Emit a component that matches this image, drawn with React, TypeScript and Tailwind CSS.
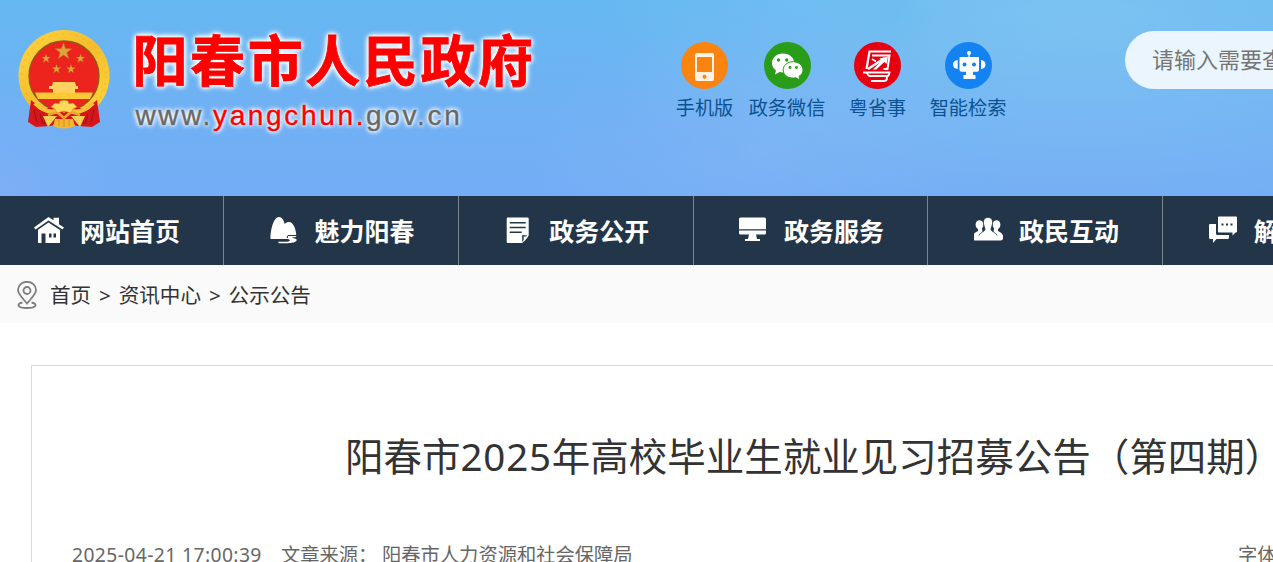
import type { ReactNode } from "react";

interface QuickLink {
  label: string;
  color: string;
  className: string;
  icon: ReactNode;
}

interface NavItem {
  label: string;
  icon: ReactNode;
}

const quickLinks: QuickLink[] = [
  {
    label: "手机版",
    color: "bg-[#fb830f]",
    className: "w-[58px]",
    icon: (
      <svg viewBox="0 0 47 47" className="w-full h-full">
        <path fill="#fff3e6" fillRule="evenodd" d="M16 11h15q2 0 2 2v24q0 2-2 2H16q-2 0-2-2V13q0-2 2-2zM16 15v15h15V15z" />
        <circle cx="23.5" cy="34.7" r="2" fill="#fb830f" />
      </svg>
    ),
  },
  {
    label: "政务微信",
    color: "bg-[#299c19]",
    className: "w-[77px] ml-[15px]",
    icon: (
      <svg viewBox="0 0 47 47" className="w-full h-full">
        <path fill="#fff" d="M19 11.500c-6.300 0-11 4.200-11 9.500 0 3 1.600 5.700 4 7.500l-1 4 4.600-2.500c5.800 1.400 14.600-.5 14.600-9.200 0-5.200-5-9.300-11.200-9.300z" />
        <path fill="#fff" stroke="#299c19" strokeWidth="1" d="M29 19.700c-5.600 0-9.800 3.700-9.800 8.200 0 5.800 5.800 9.200 12.800 7.900l4 2.200-1-3.600c2.500-1.600 4-3.900 4-6.500 0-4.500-4.400-8.200-10-8.200z" />
        <g fill="#299c19">
          <circle cx="14.500" cy="18" r="1.700" />
          <circle cx="22.700" cy="18" r="1.700" />
          <circle cx="26" cy="25.500" r="1.400" />
          <circle cx="32.500" cy="25.500" r="1.400" />
        </g>
      </svg>
    ),
  },
  {
    label: "粤省事",
    color: "bg-[#e60012]",
    className: "w-[58px] ml-[23px]",
    icon: (
      <svg viewBox="0 0 47 47" className="w-full h-full" fill="none" stroke="#fff">
        <path strokeWidth="2.200" d="M37 9.500H15.500L12.500 27" />
        <path strokeWidth="2" d="M18 13.500h17.500L33.500 27h-4" />
        <path strokeWidth="2.400" d="M14 27 30 16.500" />
        <path fill="#fff" stroke="none" d="M34 14.500 32.500 22l-2.200-2-8 7.500h-3.500l9.200-9-2.500-2z" />
        <path strokeWidth="1.500" d="m18 17 4 2.500" />
        <path strokeWidth="1.800" d="M9 30.500h26.500q-.5 3.500-2 3.500H16q-2 0-3-3M20 34h11q2 0 2 2 0 3-3 3H17" />
      </svg>
    ),
  },
  {
    label: "智能检索",
    color: "bg-[#1482f0]",
    className: "w-[77px] ml-[23px]",
    icon: (
      <svg viewBox="0 0 47 47" className="w-full h-full" fill="#fff">
        <circle cx="24" cy="11" r="2" />
        <path d="M23.400 12h1.200v4h-1.200z" />
        <path fillRule="evenodd" d="M15 15h18.500q.5 0 .5.700V28q0 1.800-1.800 1.800H28V33h2.500v4h-12v-4H21v-3.200h-4.500q-2 0-2-1.800V15.700q0-.7.500-.7zM19.500 20.500a2 2 0 1 0 .01 0zM29 20.500a2 2 0 1 0 .01 0z" />
        <path d="M12.700 18v9Q8 26.500 8 22.500T12.700 18zM36 18v9q4.500-.5 4.500-4.500T36 18z" />
      </svg>
    ),
  },
];

const navItems: NavItem[] = [
  {
    label: "网站首页",
    icon: (
      <>
        <path d="M0 11.500 14.500 1l5 3.200V1.800H25v6.400l5 3.300-1.500 2L14.500 4.500 1.500 13.500z" />
        <path fillRule="evenodd" d="M14.500 6.500 26 14v13H11.500v-9.500H7.500V27H4V13.700zM15 17.500v4h2.500v-4zM19.500 17.500v4H22v-4z" />
      </>
    ),
  },
  {
    label: "魅力阳春",
    icon: (
      <>
        <path d="M.5 22.500C.5 14 3.500 1 9 1c3 0 4.600 3 5.700 7 1.200-1.500 2.800-2 4.500-2 4 0 7 7.500 7 13H18l-1.500 2.500 3 1.500H.5z" />
        <path d="M18 20h8.500l-1 1.200h-4l5 2c1.500 3-5.500 4-11 4H9l-1-1.500h8c3 0 6-1 2-2.700z" />
      </>
    ),
  },
  {
    label: "政务公开",
    icon: (
      <g transform="translate(.7 0)">
        <path fillRule="evenodd" d="M3 1.500h20q1 0 1 1v17l-6.500 7.500H3q-1 0-1-1V2.500q0-1 1-1zM5 6v1.500h16V6zM5 10.700v1.500h16v-1.500zM5 15.500V17h12v-1.500zM17.500 19v7l5-6.500z" />
        <path d="M19 20.500h4.500L19 26z" />
      </g>
    ),
  },
  {
    label: "政务服务",
    icon: (
      <path d="M1.500 1.500h24q1.500 0 1.500 1.500v10.300H0V3q0-1.500 1.500-1.500zM0 14.500h27V17q0 1.500-1.500 1.500H17L18 23h3v2H6v-2h3l1-4.500H1.500Q0 18.500 0 17z" />
    ),
  },
  {
    label: "政民互动",
    icon: (
      <g transform="translate(-1 0)">
        <ellipse cx="6.500" cy="8.800" rx="3.900" ry="4.500" />
        <ellipse cx="23.500" cy="8.800" rx="3.900" ry="4.500" />
        <path d="M5 11h3.500l1 4-3 6H0q-.5-3.500 5-6zM25 11h-3.500l-1 4 3 6H30q.5-3.500-5-6z" />
        <path
          stroke="#233549"
          strokeWidth=".8"
          d="M15 1.500c3.500 0 5 2.500 4.500 6-.3 2.500-1.500 4-1.500 6 0 2 6.500 3 7.500 9.500h-21c1-6.500 7.500-7.500 7.500-9.500 0-2-1.200-3.500-1.500-6-.5-3.500 1-6 4.500-6z"
        />
        <path d="M0 19.500h30v2.300q0 2.700-2.500 2.700h-25Q0 24.500 0 21.800z" />
      </g>
    ),
  },
  {
    label: "解读回应",
    icon: (
      <>
        <path d="M1 8h6v9.500q0 1.500 1.500 1.500H20v2.500q0 1.500-1.500 1.500H7.500L4 27v-4H1.500Q0 23 0 21.500V9q0-1 1-1z" />
        <path fillRule="evenodd" d="M10 .5h17q1 0 1 1v14q0 1-1 1h-.5l-3 3v-3H10q-1 0-1-1v-14q0-1 1-1zM12.500 7.500v2h2v-2zM17 7.500v2h2v-2zM21.500 7.500v2h2v-2z" />
      </>
    ),
  },
];

const STAR = "M0-10 2.300-3.200 9.500-3.100 3.800 1.200 5.900 8.100 0 4-5.900 8.100-3.800 1.200-9.500-3.100-2.300-3.200z";

function Emblem() {
  return (
    <svg viewBox="0 0 92 100" className="w-[92px] h-[100px] shrink-0">
      <defs>
        <linearGradient id="gold" x1="0" y1="0" x2="1" y2="1">
          <stop offset="0" stopColor="#ffd540" />
          <stop offset=".5" stopColor="#f4bd2c" />
          <stop offset="1" stopColor="#ffd83c" />
        </linearGradient>
      </defs>
      <circle cx="46" cy="45.500" r="45.500" fill="url(#gold)" />
      <circle cx="46" cy="46" r="42" fill="none" stroke="#dda324" strokeWidth="2" strokeDasharray="2 5" opacity=".25" />
      <circle cx="46" cy="46" r="35" fill="#ed241d" stroke="#8a5a12" strokeWidth="1.300" />
      <g fill="#e0a23a" stroke="#b0661f" strokeWidth=".5">
        <path d={STAR} transform="translate(45.500 21.500) scale(.9)" />
        <path d={STAR} transform="translate(28 28.500) scale(.48)" />
        <path d={STAR} transform="translate(62.500 28.500) scale(.48)" />
        <path d={STAR} transform="translate(38.500 39) scale(.48)" />
        <path d={STAR} transform="translate(53 39) scale(.48)" />
      </g>
      <path fill="#ffd160" d="M35 52h22l1 4h2v3h-3v4H35v-4h-4v-3h3z" />
      <path fill="#ffc936" d="M17 62.500h58l-3 6.500H20z" />
      {/* Red drapery at both sides */}
      <path fill="#d6161b" d="m13 70 11 9 14-2 8 6 8-6 14 2 11-9 3 22-8 5-14-1-6-1-8 1-8-1-6 1-14 1-8-5z" />
      <path fill="none" stroke="#9e171a" strokeWidth="1.200" d="m16 80 3 12M22 84l3 10M76 80l-3 12M70 84l-3 10M28 86l-2 8M64 86l2 8" />
      <path fill="#f3d154" d="m25 86 14 0-9 11zM67 86l-14 0 9 11z" />
      <path fill="#f3b62c" d="M37 89h18l2 7q-11 5-22 0z" />
      <path fill="none" stroke="#f7c039" strokeWidth="4.500" d="M17 73q11 11 22 8M75 73q-11 11-22 8" />
      <path fill="none" stroke="#e9a92c" strokeWidth="2.500" d="m30 85 9-3 7 6 7-6 9 3" />
      <path fill="#ffd95a" stroke="#dc8b23" strokeWidth=".6" d="m33 77 4-4 4 1 1-3q4-1.500 8 0l1 3 4-1 4 4-4 2-2 4-7-2-7 2-2-4z" />
      <path fill="none" stroke="#c88525" strokeWidth=".8" d="M41 90v6M46 89v8M51 90v6" />
    </svg>
  );
}

function PinIcon() {
  return (
    <svg viewBox="0 0 20 28" className="mt-[2px] w-[20px] h-[28px] shrink-0" fill="none" stroke="#7d7d7d" strokeWidth="1.800">
      <path d="M10 22.500C5 16.500 1 13 1 9a9 8.200 0 0 1 18 0c0 4-4 7.500-9 13.500z" />
      <circle cx="10" cy="9.500" r="3.500" />
      <path d="M5.500 21.500C-.5 22.500-.5 27 10 27s10.500-4.500 4.500-5.500" />
    </svg>
  );
}

export default function App() {
  return (
    <div className="w-[1273px] h-[562px] overflow-hidden bg-white font-['Noto_Sans','Noto_Sans_CJK_SC',sans-serif] whitespace-nowrap">
      {/* Header */}
      <header className="h-[196px] flex items-start bg-[radial-gradient(ellipse_50px_50px_at_890px_10px,#69bbee90,transparent),radial-gradient(ellipse_230px_130px_at_760px_150px,#8bbaf660,transparent),radial-gradient(ellipse_500px_200px_at_1080px_20px,#90cef180,transparent),radial-gradient(ellipse_110px_110px_at_0px_196px,#82b1f890,transparent),linear-gradient(to_bottom,#65b8f1,#70b0f4_60%,#74adf5)]">
        <div className="w-[675.500px] shrink-0 flex pl-[17.5px] pt-[30px]">
          <Emblem />
          <div className="ml-[23px] font-['Liberation_Sans','Noto_Sans_CJK_SC',sans-serif]">
            <h1 className="text-[55px] leading-[65px] tracking-[2.6px] font-bold text-[#fe0000] [-webkit-text-stroke:0.8px_#fe0000] [text-shadow:0_0_2px_#fff,0_0_4px_#fff,0_0_5px_#fff,0_0_6px_#fff,0_0_7px_#fff]">
              阳春市人民政府
            </h1>
            <p className="mt-[4px] ml-[3px] text-[28px] leading-[34px] tracking-[2.65px] text-[#686868] [-webkit-text-stroke:0.4px] [text-shadow:0_0_2px_#fff,0_0_4px_#fff,0_0_5px_#fff,0_0_6px_#fff]">
              www.<span className="text-[#fe0000]">yangchun.</span>gov.cn
            </p>
          </div>
        </div>

        <div className="w-[449.500px] shrink-0 flex pt-[42px]">
          {quickLinks.map((link) => (
            <a key={link.label} className={`flex flex-col items-center shrink-0 ${link.className}`}>
              <span className={`w-[47px] h-[47px] rounded-full ${link.color}`}>{link.icon}</span>
              <span className="mt-[5px] text-[19.2px] leading-[28px] text-[#0b5293]">{link.label}</span>
            </a>
          ))}
        </div>

        <div className="mt-[31px] w-[400px] h-[58px] shrink-0 rounded-full bg-[#eaf5fe] pl-[27px] text-[22px] leading-[57px] text-[#757575]">
          请输入需要查找的内容
        </div>
      </header>

      {/* Main nav */}
      <nav className="h-[69px] flex bg-[#233549]">
        {navItems.map((item, i) => (
          <a
            key={item.label}
            className={`h-full shrink-0 flex items-start border-r border-[#7b8590] text-white ${
              i === 0 ? "w-[224px] pl-[34px]" : "w-[234.8px] pl-[45.5px]"
            }`}
          >
            <svg viewBox="0 0 30 28" fill="#fff" className="mt-[20px] w-[30px] h-[28px] shrink-0">
              {item.icon}
            </svg>
            <span className={`text-[25px] leading-[70px] font-bold ${i === 0 ? "ml-[16px]" : "ml-[15px]"}`}>
              {item.label}
            </span>
          </a>
        ))}
      </nav>

      {/* Breadcrumb */}
      <div className="h-[58px] flex items-center bg-[#fafafa] pl-[17px] text-[20.6px] text-[#333]">
        <PinIcon />
        <div className="ml-[13px] flex items-center leading-[58px] pt-[2px]">
          <span>首页</span>
          <span className="w-[27.5px] text-center">&gt;</span>
          <span>资讯中心</span>
          <span className="w-[27.5px] text-center">&gt;</span>
          <span>公示公告</span>
        </div>
      </div>

      {/* Article */}
      <main className="mt-[42px] ml-[31px] w-[1300px] h-[300px] border border-[#d9d9d9]">
        <h2 className="mt-[61px] ml-[313px] text-[38.5px] leading-[58px] text-[#333]">
          阳春市<span className="tracking-[0.8px]">2025</span>年高校毕业生就业见习招募公告（第四期）
        </h2>
        <div className="mt-[56px] ml-[40px] flex text-[19.3px] leading-[28px] text-[#666]">
          <span className="w-[209px] tracking-[0.4px]">2025-04-21 17:00:39</span>
          <span className="w-[101px]">文章来源：</span>
          <span className="w-[856px]">阳春市人力资源和社会保障局</span>
          <span>字体：</span>
        </div>
      </main>
    </div>
  );
}
